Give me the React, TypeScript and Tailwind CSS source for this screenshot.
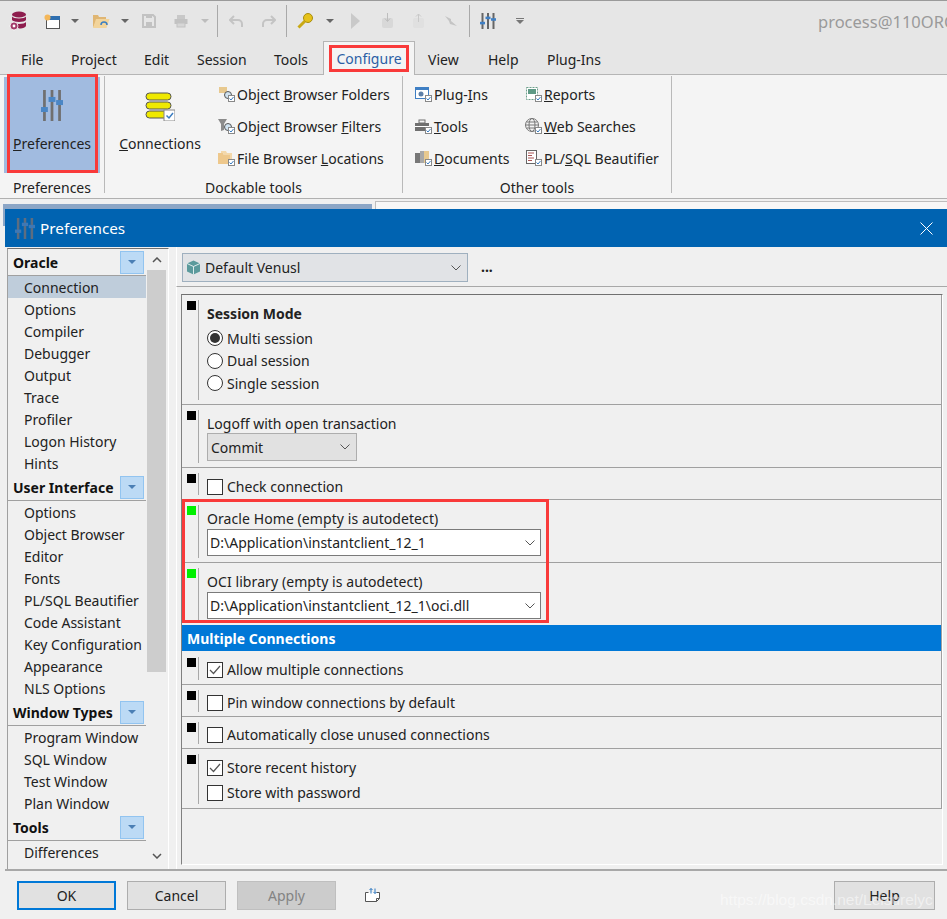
import type { ReactNode } from "react";

const font = "font-['Noto_Sans','Liberation_Sans',sans-serif]";

function Sliders({ color = "#6b6b6b", knob = "#4a86c5", w, h }: { color?: string; knob?: string; w: number; h: number }) {
  return (
    <svg width={w} height={h} viewBox="0 0 16 20" preserveAspectRatio="none">
      <rect x="1.5" y="0" width="2" height="20" fill={color} />
      <rect x="7" y="0" width="2" height="20" fill={color} />
      <rect x="12.500" y="0" width="2" height="20" fill={color} />
      <rect x="0" y="11" width="5" height="3.200" fill={knob} />
      <rect x="5.500" y="4.500" width="5" height="3.200" fill={knob} />
      <rect x="11" y="6.500" width="5" height="3.200" fill={knob} />
    </svg>
  );
}

function MiniCheck() {
  return (
    <svg width="7" height="7" viewBox="0 0 7 7" className="absolute right-0 bottom-0 bg-white">
      <rect x="0.500" y="0.500" width="6" height="6" fill="#fff" stroke="#888" />
      <path d="M1.500 3.500 3 5 5.500 2" fill="none" stroke="#3a7cc0" />
    </svg>
  );
}

function RibbonIcon({ children }: { children: ReactNode }) {
  return (
    <span className="relative w-[17px] h-[16px] shrink-0 mr-[2px]">
      <svg width="15" height="15" viewBox="0 0 15 15">{children}</svg>
      <MiniCheck />
    </span>
  );
}

function RibbonItem({ icon, children, width }: { icon: ReactNode; children: ReactNode; width: string }) {
  return (
    <div className={`flex items-center h-[32px] ${width}`}>
      {icon}
      <span className="whitespace-nowrap">{children}</span>
    </div>
  );
}

function Caret() {
  return <span className="w-0 h-0 border-x-[4px] border-x-transparent border-t-[4px] border-t-[#666]" />;
}

function Tool({ w, children }: { w: string; children?: ReactNode }) {
  return <div className={`${w} h-[24px] flex items-center justify-center shrink-0`}>{children}</div>;
}

function Sep() {
  return <div className="w-px h-[32px] bg-[#a9a9a9] shrink-0" />;
}

function Toolbar() {
  return (
    <div className="h-[41px] bg-[#e6e6e6] border-t border-t-[#9a9a9a] flex items-center relative">
      <Tool w="w-[36px]">
        <svg width="18" height="20" viewBox="0 0 18 20">
          <ellipse cx="10" cy="3.500" rx="7" ry="3" fill="#8e1d4e" />
          <path d="M3 5.500c1 2.500 13 2.500 14 0v3.500c-1 2.500-13 2.500-14 0z" fill="#8e1d4e" />
          <path d="M3 11c1 2.500 13 2.500 14 0v3.500c0 2.500-5 3-7 3z" fill="#8e1d4e" />
          <circle cx="5" cy="15" r="4" fill="#a33c6b" stroke="#fff" strokeWidth="0.800" />
          <circle cx="5" cy="15" r="1.400" fill="#fff" />
        </svg>
      </Tool>
      <Tool w="w-[32px]">
        <svg width="16" height="15" viewBox="0 0 16 15">
          <rect x="2.500" y="2.500" width="13" height="12" fill="#fff" stroke="#555" />
          <rect x="3" y="2" width="13" height="4" fill="#2f6fb0" />
          <circle cx="3.500" cy="3.500" r="3" fill="#f4b75a" />
        </svg>
      </Tool>
      <Tool w="w-[14px]"><Caret /></Tool>
      <Tool w="w-[38px]">
        <svg width="18" height="16" viewBox="0 0 18 16">
          <path d="M1 2h5l1 2h7v3H5L1 15z" fill="#e0b673" />
          <path d="M1 15 4 6h13.500l-3 9z" fill="#f2d49b" />
          <path d="M9 12a3 3 0 0 1 6 0" fill="none" stroke="#3c7fc2" strokeWidth="1.500" />
        </svg>
      </Tool>
      <Tool w="w-[9px]"><Caret /></Tool>
      <Tool w="w-[40px]">
        <svg width="14" height="14" viewBox="0 0 14 14">
          <path d="M1 1h10l2 2v10H1z" fill="none" stroke="#c2c2c2" strokeWidth="2" />
          <rect x="4" y="8" width="6" height="5" fill="#c2c2c2" />
          <rect x="4" y="1" width="6" height="3" fill="#c2c2c2" />
        </svg>
      </Tool>
      <Tool w="w-[24px]">
        <svg width="14" height="14" viewBox="0 0 14 14">
          <rect x="3" y="1" width="8" height="4" fill="#c8c8c8" />
          <rect x="0.500" y="5" width="13" height="5" fill="#c2c2c2" />
          <rect x="3" y="9" width="8" height="4" fill="#d6d6d6" stroke="#c2c2c2" />
        </svg>
      </Tool>
      <Tool w="w-[24px]"><span className="w-0 h-0 border-x-[4px] border-x-transparent border-t-[4px] border-t-[#bdbdbd]" /></Tool>
      <Sep />
      <Tool w="w-[36px]">
        <svg width="15" height="13" viewBox="0 0 15 13"><path d="M5 1 1 5l4 4M1 5h8a4 4 0 0 1 4 4v3" fill="none" stroke="#c4c4c4" strokeWidth="2" /></svg>
      </Tool>
      <Tool w="w-[28px]">
        <svg width="15" height="13" viewBox="0 0 15 13"><path d="M10 1l4 4-4 4M14 5H6a4 4 0 0 0-4 4v3" fill="none" stroke="#c4c4c4" strokeWidth="2" /></svg>
      </Tool>
      <Tool w="w-[4px]" />
      <Sep />
      <Tool w="w-[36px]">
        <svg width="16" height="16" viewBox="0 0 16 16">
          <circle cx="11" cy="5" r="4.500" fill="#e6c21a" stroke="#a88d10" />
          <path d="M8 8 1.500 14.500" stroke="#c9a915" strokeWidth="3" />
        </svg>
      </Tool>
      <Tool w="w-[14px]"><Caret /></Tool>
      <Tool w="w-[36px]"><span className="w-0 h-0 border-y-[8px] border-y-transparent border-l-[9px] border-l-[#c9c9c9]" /></Tool>
      <Tool w="w-[28px]">
        <svg width="13" height="16" viewBox="0 0 13 16"><rect x="1" y="5" width="11" height="10" rx="2" fill="#d8d8d8" /><path d="M6.500 0v8M4 5.500l2.500 3 2.500-3" fill="none" stroke="#bdbdbd" /></svg>
      </Tool>
      <Tool w="w-[35px]">
        <svg width="13" height="16" viewBox="0 0 13 16"><rect x="1" y="5" width="11" height="10" rx="2" fill="#e0e0e0" /><path d="M6.500 9V1M4 3.500 6.500 1 9 3.500" fill="none" stroke="#c9c9c9" /></svg>
      </Tool>
      <Tool w="w-[30px]">
        <svg width="14" height="12" viewBox="0 0 14 12"><path d="M1 1l6 3v2l6 5-7-2-1-3z" fill="#c4c4c4" /></svg>
      </Tool>
      <Tool w="w-[3px]" />
      <Sep />
      <Tool w="w-[36px]"><Sliders w={16} h={16} color="#666" knob="#3f7fc4" /></Tool>
      <Tool w="w-[28px]">
        <div className="flex flex-col items-center gap-[1px]">
          <span className="w-[8px] h-px bg-[#777]" />
          <span className="w-0 h-0 border-x-[4px] border-x-transparent border-t-[4px] border-t-[#777]" />
        </div>
      </Tool>
      <span className="absolute left-[818px] top-[11px] text-[16.500px] leading-[20px] text-[#9a9a9a] whitespace-nowrap">process@110ORCL</span>
    </div>
  );
}

function Tabs() {
  return (
    <div className="h-[34px] bg-[#e6e6e6] border-b border-b-[#b5b5b5] flex text-[14px] text-[#222] pl-[21px]">
      <div className="w-[50px] h-[33px] pt-[8px] shrink-0">File</div>
      <div className="w-[73px] h-[33px] pt-[8px] shrink-0">Project</div>
      <div className="w-[53px] h-[33px] pt-[8px] shrink-0">Edit</div>
      <div className="w-[77px] h-[33px] pt-[8px] shrink-0">Session</div>
      <div className="w-[49px] h-[33px] pt-[8px] shrink-0">Tools</div>
      <div className="w-[92px] h-[34px] bg-[#f4f4f4] border border-b-0 border-[#b5b5b5] flex justify-center pt-[6px] text-[#2c5fa5] relative shrink-0">
        Configure
        <span className="absolute left-[5px] top-[3px] w-[80px] h-[27px] border-[3px] border-[#f93a3a]" />
      </div>
      <div className="w-[60px] h-[33px] pt-[8px] ml-[13px] shrink-0">View</div>
      <div className="w-[59px] h-[33px] pt-[8px] shrink-0">Help</div>
      <div className="h-[33px] pt-[8px] shrink-0">Plug-Ins</div>
    </div>
  );
}

function GroupSep() {
  return <div className="w-px h-[117px] bg-[#b9b9b9] shrink-0" />;
}

function Ribbon() {
  return (
    <div className="h-[124px] bg-[#f4f4f4] border-b border-b-[#b0b0b0] flex pt-[1px] text-[14px] text-[#222]">
      <div className="w-[104px] shrink-0 flex flex-col items-center">
        <div className="relative mt-[1px] w-[96px] h-[96px] bg-[#a1bbe0] flex flex-col items-center pt-[13px]">
          <Sliders w={22} h={31} color="#707070" knob="#4a86c5" />
          <span className="mt-[12px]"><u>P</u>references</span>
          <span className="absolute left-[3px] -top-[3px] w-[91px] h-[99px] border-[3px] border-[#f93a3a]" />
        </div>
        <span className="mt-[4px]">Preferences</span>
      </div>
      <GroupSep />
      <div className="w-[297px] shrink-0 flex flex-col">
        <div className="flex h-[98px]">
          <div className="w-[112px] flex flex-col items-center pt-[15px] shrink-0 pr-[2px]">
            <svg width="30" height="30" viewBox="0 0 30 30">
              <rect x="1" y="2" width="25" height="7" rx="3.500" fill="#efe900" stroke="#555" />
              <rect x="1" y="11" width="25" height="7" rx="3.500" fill="#efe900" stroke="#555" />
              <rect x="1" y="20" width="25" height="7" rx="3.500" fill="#efe900" stroke="#555" />
              <rect x="19" y="19" width="11" height="11" fill="#fff" stroke="#888" />
              <path d="M21.500 24.500 24 27l4-5" fill="none" stroke="#3a7cc0" strokeWidth="1.500" />
            </svg>
            <span className="mt-[12px]"><u>C</u>onnections</span>
          </div>
          <div className="flex flex-col pt-[2px] pl-[1px]">
            <RibbonItem width="w-[180px]" icon={<RibbonIcon><rect x="1" y="1" width="8" height="6" fill="#e8c98f" /><circle cx="10" cy="9" r="3.500" fill="#cfe2f0" stroke="#555" /><path d="m12 11 3 3" stroke="#555" /></RibbonIcon>}>Object <u>B</u>rowser Folders</RibbonItem>
            <RibbonItem width="w-[180px]" icon={<RibbonIcon><path d="M0 1h9L6 6v6L3 13V6z" fill="#8b8b8b" /><circle cx="10" cy="9" r="3.500" fill="#cfe2f0" stroke="#555" /><path d="m12 11 3 3" stroke="#555" /></RibbonIcon>}>Object Browser <u>F</u>ilters</RibbonItem>
            <RibbonItem width="w-[180px]" icon={<RibbonIcon><path d="M0 3h5l1 2h6v9H0z" fill="#eec88c" /><path d="M3 1h5l1 2h5v8h-2V5H6L5 3H3z" fill="#f3d8ab" /></RibbonIcon>}>File Browser <u>L</u>ocations</RibbonItem>
          </div>
        </div>
        <span className="text-center mt-[3px]">Dockable tools</span>
      </div>
      <GroupSep />
      <div className="w-[268px] shrink-0 flex flex-col">
        <div className="flex h-[98px] pt-[2px] pl-[12px]">
          <div className="flex flex-col w-[110px]">
            <RibbonItem width="w-[100px]" icon={<RibbonIcon><rect x="0.500" y="1.500" width="13" height="11" fill="#fff" stroke="#3f7fc4" /><rect x="0" y="1" width="14" height="3" fill="#3f7fc4" /><circle cx="6" cy="8" r="2.500" fill="#5c7fa8" /></RibbonIcon>}>Plug-<u>I</u>ns</RibbonItem>
            <RibbonItem width="w-[100px]" icon={<RibbonIcon><rect x="0" y="5" width="14" height="8" fill="#6f6f6f" /><rect x="4" y="2" width="6" height="3" fill="none" stroke="#6f6f6f" /><rect x="0" y="8" width="14" height="1" fill="#fff" /></RibbonIcon>}><u>T</u>ools</RibbonItem>
            <RibbonItem width="w-[100px]" icon={<RibbonIcon><rect x="0" y="3" width="5" height="10" fill="#777" /><rect x="5" y="1" width="4" height="12" fill="#a8a8a8" /><rect x="9" y="1" width="5" height="12" fill="#e8c98f" /></RibbonIcon>}><u>D</u>ocuments</RibbonItem>
          </div>
          <div className="flex flex-col">
            <RibbonItem width="w-[140px]" icon={<RibbonIcon><rect x="1.500" y="1.500" width="11" height="12" fill="#fff" stroke="#6fa08c" strokeDasharray="2 1" /><rect x="3" y="3" width="8" height="5" fill="#5f9a86" /></RibbonIcon>}><u>R</u>eports</RibbonItem>
            <RibbonItem width="w-[140px]" icon={<RibbonIcon><circle cx="7" cy="7" r="6.500" fill="none" stroke="#777" /><ellipse cx="7" cy="7" rx="3" ry="6.500" fill="none" stroke="#777" /><path d="M0.500 7h13M1.500 4h11M1.500 10h11" stroke="#777" /></RibbonIcon>}><u>W</u>eb Searches</RibbonItem>
            <RibbonItem width="w-[140px]" icon={<RibbonIcon><rect x="1.500" y="0.500" width="10" height="13" fill="#fff" stroke="#666" /><path d="M3 3h6M3 5.500h4M3 8h6M3 10.500h4" stroke="#a55" /></RibbonIcon>}>PL/<u>S</u>QL Beautifier</RibbonItem>
          </div>
        </div>
        <span className="text-center mt-[3px]">Other tools</span>
      </div>
      <GroupSep />
    </div>
  );
}

function Header({ title }: { title: string }) {
  return (
    <div className="h-[27px] flex items-center border-b border-b-[#a0a0a0] pl-[5px] pr-[2px] justify-between bg-[#f0f0f0] shrink-0">
      <span className="font-bold text-[14px] text-[#111]">{title}</span>
      <span className="w-[24px] h-[23px] bg-[#bcdaf5] border border-[#92c4f0] flex items-center justify-center">
        <span className="w-0 h-0 border-x-[4px] border-x-transparent border-t-[4px] border-t-[#4a7fb5]" />
      </span>
    </div>
  );
}

function Item({ label, selected }: { label: string; selected?: boolean }) {
  return (
    <div className={`h-[22px] leading-[22px] pt-[1px] pl-[16px] text-[14px] text-[#222] whitespace-nowrap shrink-0 ${selected ? "bg-[#bfcddb]" : ""}`}>{label}</div>
  );
}

function SideList() {
  return (
    <div className="w-[162px] h-[622px] ml-[2px] mt-[1px] bg-[#f0f0f0] border-t border-t-[#707070] border-l border-l-[#a0a0a0] border-r border-r-white flex shrink-0">
      <div className="w-[138px] shrink-0 flex flex-col overflow-hidden">
        <Header title="Oracle" />
        {["Connection", "Options", "Compiler", "Debugger", "Output", "Trace", "Profiler", "Logon History", "Hints"].map((t, i) => (
          <Item key={t} label={t} selected={i === 0} />
        ))}
        <Header title="User Interface" />
        {["Options", "Object Browser", "Editor", "Fonts", "PL/SQL Beautifier", "Code Assistant", "Key Configuration", "Appearance", "NLS Options"].map((t) => (
          <Item key={t} label={t} />
        ))}
        <Header title="Window Types" />
        {["Program Window", "SQL Window", "Test Window", "Plan Window"].map((t) => (
          <Item key={t} label={t} />
        ))}
        <Header title="Tools" />
        <Item label="Differences" />
      </div>
      <div className="w-[19px] ml-px flex flex-col bg-[#f0f0f0] shrink-0">
        <div className="h-[21px] flex items-center justify-center">
          <svg width="10" height="6" viewBox="0 0 10 6"><path d="M1 5l4-4 4 4" fill="none" stroke="#555" strokeWidth="1.500" /></svg>
        </div>
        <div className="h-[402px] bg-[#cdcdcd]" />
        <div className="flex-1" />
        <div className="h-[21px] flex items-center justify-center mb-[4px]">
          <svg width="10" height="6" viewBox="0 0 10 6"><path d="M1 1l4 4 4-4" fill="none" stroke="#555" strokeWidth="1.500" /></svg>
        </div>
      </div>
    </div>
  );
}

function Section({ height, green, children, border = true }: { height: string; green?: boolean; children: ReactNode; border?: boolean }) {
  return (
    <div className={`${height} flex ${border ? "border-b border-b-[#a0a0a0]" : ""}`}>
      <div className="w-[16px] shrink-0 pl-[5px] pt-[6px]">
        <div className={`w-[9px] h-[9px] ${green ? "bg-[#00f000]" : "bg-black"}`} />
      </div>
      <div className="w-px bg-[#a8a8a8] mt-[5px] mb-[4px] shrink-0" />
      <div className="flex flex-col pl-[8px]">{children}</div>
    </div>
  );
}

function Radio({ label, on }: { label: string; on?: boolean }) {
  return (
    <div className="flex items-center h-[22.500px] gap-[4px]">
      <span className="w-[16px] h-[16px] rounded-full border border-[#333] bg-white flex items-center justify-center">
        {on && <span className="w-[10px] h-[10px] rounded-full bg-[#333]" />}
      </span>
      <span>{label}</span>
    </div>
  );
}

function Check({ label, on, h }: { label: string; on?: boolean; h: string }) {
  return (
    <div className={`flex items-center ${h} gap-[4px]`}>
      <span className="w-[16px] h-[16px] border border-[#333] bg-white flex items-center justify-center">
        {on && (
          <svg width="12" height="10" viewBox="0 0 12 10"><path d="M1 5l3.500 3.500L11 1" fill="none" stroke="#555" strokeWidth="1.200" /></svg>
        )}
      </span>
      <span className="whitespace-nowrap">{label}</span>
    </div>
  );
}

function Chevron() {
  return <svg width="10" height="6" viewBox="0 0 10 6"><path d="M0.500 0.500 5 5l4.500-4.500" fill="none" stroke="#555" /></svg>;
}

function Combo({ value }: { value: string }) {
  return (
    <div className="w-[334px] h-[27px] bg-white border border-[#7a7a7a] flex items-center justify-between pl-[2px] pr-[5px]">
      <span className="-mt-[1px]">{value}</span>
      <Chevron />
    </div>
  );
}

function Settings() {
  return (
    <div className="flex-1 min-w-0 ml-[7px] flex flex-col text-[14px] text-[#222]">
      <div className="h-[40px] border-b border-b-[#a8a8a8] border-l border-l-white flex items-start pl-[5px] pt-[6px] shrink-0">
        <div className="w-[286px] h-[29px] bg-[#e1e3e6] border border-[#9fb0bf] flex items-center pl-[3px] pr-[6px] shrink-0">
          <svg width="15" height="15" viewBox="0 0 15 15" className="mr-[4px]">
            <path d="M7.500 0.500 14 3.500v8l-6.500 3-6.500-3v-8z" fill="#5b9a9c" />
            <path d="M1 3.500l6.500 3 6.500-3M7.500 6.500v8" fill="none" stroke="#fff" strokeWidth="0.800" />
          </svg>
          <span className="flex-1">Default Venusl</span>
          <Chevron />
        </div>
        <span className="ml-[13px] mt-[4px] font-bold leading-[20px]">...</span>
      </div>
      <div className="h-[7px] border-l border-l-white shrink-0" />
      <div className="w-[767px] h-[575px] border-l border-l-white pl-[4px] shrink-0">
        <div className="w-[762px] h-[571px] border-t border-t-[#707070] border-l border-l-[#808080] border-r border-r-white border-b border-b-white flex flex-col">
          <div className="border-r border-r-[#a0a0a0] flex flex-col">
            <Section height="h-[110px]">
              <span className="font-bold mt-[8px] leading-[22px]">Session Mode</span>
              <div className="mt-[2px]">
                <Radio label="Multi session" on />
                <Radio label="Dual session" />
                <Radio label="Single session" />
              </div>
            </Section>
            <Section height="h-[63px]">
              <span className="leading-[20px] mt-[9px]">Logoff with open transaction</span>
              <div className="w-[150px] h-[28px] -mt-[1px] bg-[#e1e1e1] border border-[#adadad] flex items-center justify-between pl-[3px] pr-[6px]">
                <span>Commit</span>
                <Chevron />
              </div>
            </Section>
            <Section height="h-[32px]"><Check label="Check connection" h="h-[25px] mt-[6px]" /></Section>
            <Section height="h-[63px]" green>
              <span className="leading-[20px] mt-[9px] tracking-[0.08px]">Oracle Home (empty is autodetect)</span>
              <Combo value="D:\Application\instantclient_12_1" />
            </Section>
            <Section height="h-[62px]" border={false} green>
              <span className="leading-[20px] mt-[9px] tracking-[0.08px]">OCI library (empty is autodetect)</span>
              <Combo value="D:\Application\instantclient_12_1\oci.dll" />
            </Section>
            <div className="h-[26px] bg-[#0078d7] text-white font-bold flex items-center pl-[5px]">Multiple Connections</div>
            <div className="h-px bg-[#f0f0f0]" />
            <Section height="h-[33px]"><Check label="Allow multiple connections" on h="h-[25px] mt-[5px]" /></Section>
            <Section height="h-[32px]"><Check label="Pin window connections by default" h="h-[25px] mt-[5px]" /></Section>
            <Section height="h-[32px]"><Check label="Automatically close unused connections" h="h-[25px] mt-[5px]" /></Section>
            <Section height="h-[60px]">
              <Check label="Store recent history" on h="h-[25px] mt-[6px]" />
              <Check label="Store with password" h="h-[25px]" />
            </Section>
          </div>
        </div>
      </div>
    </div>
  );
}

function Btn({ children, w, cls = "" }: { children: ReactNode; w: string; cls?: string }) {
  return <div className={`${w} h-[29px] flex items-center justify-center shrink-0 ${cls}`}>{children}</div>;
}

function Footer() {
  return (
    <div className="h-[50px] border-t-2 border-t-[#a8a8a8] flex items-start pt-[10px] pl-[12px] text-[14px] text-[#222]">
      <Btn w="w-[99px]" cls="bg-[#e1e1e1] border-2 border-[#0078d7]">OK</Btn>
      <Btn w="w-[99px]" cls="ml-[11px] bg-[#e1e1e1] border border-[#adadad]">Cancel</Btn>
      <Btn w="w-[99px]" cls="ml-[11px] bg-[#cccccc] border border-[#bfbfbf] text-[#838383]">Apply</Btn>
      <div className="ml-[29px] mt-[7px] w-[16px] h-[15px]">
        <svg width="16" height="15" viewBox="0 0 16 15">
          <path d="M0.500 4.500h3M11.500 4.500h3v6l-3 3h-11v-9" fill="#fff" stroke="#555" />
          <path d="M11.500 13.500v-3h3" fill="none" stroke="#555" />
          <path d="M6 0.500v5M4.500 2 6 0.500 7.500 2M10 5.500v-5M8.500 4 10 5.500 11.500 4" fill="none" stroke="#2f78c0" />
        </svg>
      </div>
      <Btn w="w-[101px]" cls="ml-[453px] bg-[#e1e1e1] border border-[#adadad]">Help</Btn>
    </div>
  );
}

export default function App() {
  return (
    <div className={`${font} w-[947px] h-[919px] overflow-hidden relative bg-[#f0f0f0] flex flex-col`}>
      <Toolbar />
      <Tabs />
      <Ribbon />
      <div className="h-[10px] flex bg-[#f0f0f0] shrink-0">
        <div className="w-[372px] pl-[3px] pt-[5px] shrink-0">
          <div className="h-[5px] bg-[#8ca6c6]" />
        </div>
        <div className="w-[3px] shrink-0" />
        <div className="flex-1 mt-[2px] bg-[#f7f7f7] border-t border-t-[#bdbdbd] border-l border-l-[#bdbdbd]" />
      </div>
      <div className="flex-1 flex min-h-0">
        <div className="w-[5px] shrink-0 pl-[3px]">
          <div className="h-[17px] bg-[#8ca6c6]" />
        </div>
        <div className="flex-1 flex flex-col bg-[#f0f0f0] min-w-0">
          <div className="h-[38px] bg-[#0063b1] flex items-center pl-[10px] pr-[14px] text-white text-[15.300px] shrink-0">
            <Sliders w={20} h={21} color="#5d6d80" knob="#3e78b5" />
            <span className="ml-[5px] flex-1">Preferences</span>
            <svg width="13" height="13" viewBox="0 0 13 13"><path d="M0.500 0.500l12 12M12.500 0.500l-12 12" stroke="#fff" /></svg>
          </div>
          <div className="flex h-[622px] shrink-0 overflow-hidden">
            <SideList />
            <Settings />
          </div>
          <Footer />
        </div>
      </div>
      <span className="absolute left-[182px] top-[499px] w-[367px] h-[124px] border-[3px] border-[#f93a3a]" />
      <span className="absolute left-[720px] top-[890px] font-['Liberation_Sans',sans-serif] text-[15.500px] leading-[20px] text-white/50 whitespace-nowrap">https://blog.csdn.net/Leisurelyc</span>
    </div>
  );
}
